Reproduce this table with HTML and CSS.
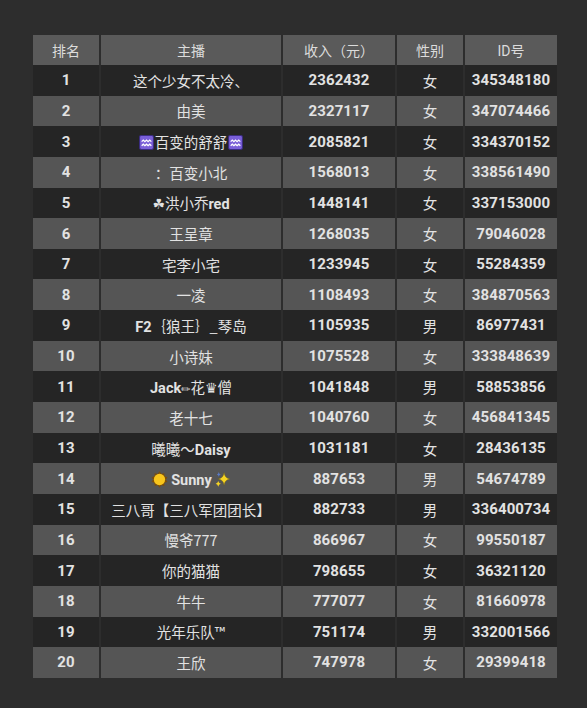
FILE: index.html
```html
<!DOCTYPE html>
<html lang="zh">
<head>
<meta charset="utf-8">
<link rel="stylesheet" href="styles.css">
</head>
<body>
<table class="rank">
  <colgroup>
    <col class="c1"><col class="c2"><col class="c3"><col class="c4"><col class="c5">
  </colgroup>
  <thead>
    <tr><th>排名</th><th>主播</th><th>收入（元）</th><th>性别</th><th>ID号</th></tr>
  </thead>
  <tbody>
    <tr><td class="n">1</td><td class="name">这个少女不太冷、</td><td class="n">2362432</td><td class="g">女</td><td class="n">345348180</td></tr>
    <tr><td class="n">2</td><td class="name">由美</td><td class="n">2327117</td><td class="g">女</td><td class="n">347074466</td></tr>
    <tr><td class="n">3</td><td class="name"><svg class="emo" viewBox="0 0 14 14"><rect x="0.5" y="0.5" width="13" height="13" rx="1.5" fill="#7a5fd8" stroke="#3a2c80"/><path d="M2.5 6.2 l1.5-1.4 1.5 1.4 1.5-1.4 1.5 1.4 1.5-1.4 1.5 1.4 M2.5 10 l1.5-1.4 1.5 1.4 1.5-1.4 1.5 1.4 1.5-1.4 1.5 1.4" fill="none" stroke="#fff" stroke-width="1.2"/></svg>百变的舒舒<svg class="emo" viewBox="0 0 14 14"><rect x="0.5" y="0.5" width="13" height="13" rx="1.5" fill="#7a5fd8" stroke="#3a2c80"/><path d="M2.5 6.2 l1.5-1.4 1.5 1.4 1.5-1.4 1.5 1.4 1.5-1.4 1.5 1.4 M2.5 10 l1.5-1.4 1.5 1.4 1.5-1.4 1.5 1.4 1.5-1.4 1.5 1.4" fill="none" stroke="#fff" stroke-width="1.2"/></svg></td><td class="n">2085821</td><td class="g">女</td><td class="n">334370152</td></tr>
    <tr><td class="n">4</td><td class="name">：百变小北</td><td class="n">1568013</td><td class="g">女</td><td class="n">338561490</td></tr>
    <tr><td class="n">5</td><td class="name"><span class="sym">☘</span>洪小乔<b>red</b></td><td class="n">1448141</td><td class="g">女</td><td class="n">337153000</td></tr>
    <tr><td class="n">6</td><td class="name">王呈章</td><td class="n">1268035</td><td class="g">女</td><td class="n">79046028</td></tr>
    <tr><td class="n">7</td><td class="name">宅李小宅</td><td class="n">1233945</td><td class="g">女</td><td class="n">55284359</td></tr>
    <tr><td class="n">8</td><td class="name">一凌</td><td class="n">1108493</td><td class="g">女</td><td class="n">384870563</td></tr>
    <tr><td class="n">9</td><td class="name"><b>F2</b>｛狼王｝_琴岛</td><td class="n">1105935</td><td class="g">男</td><td class="n">86977431</td></tr>
    <tr><td class="n">10</td><td class="name">小诗妹</td><td class="n">1075528</td><td class="g">女</td><td class="n">333848639</td></tr>
    <tr><td class="n">11</td><td class="name"><b>Jack</b><span class="sym small">✏</span>花<span class="sym">♛</span>僧</td><td class="n">1041848</td><td class="g">男</td><td class="n">58853856</td></tr>
    <tr><td class="n">12</td><td class="name">老十七</td><td class="n">1040760</td><td class="g">女</td><td class="n">456841345</td></tr>
    <tr><td class="n">13</td><td class="name">曦曦～<b>Daisy</b></td><td class="n">1031181</td><td class="g">女</td><td class="n">28436135</td></tr>
    <tr><td class="n">14</td><td class="name"><svg class="emo sun" viewBox="0 0 16 16"><path d="M8 0.3 L9.7 2.6 L12.5 2 L12.7 4.8 L15.5 6 L14 8 L15.5 10 L12.7 11.2 L12.5 14 L9.7 13.4 L8 15.7 L6.3 13.4 L3.5 14 L3.3 11.2 L0.5 10 L2 8 L0.5 6 L3.3 4.8 L3.5 2 L6.3 2.6 Z" fill="#7a4e0c"/><circle cx="8" cy="8" r="5.3" fill="#f7c51c"/></svg><b>Sunny</b><svg class="emo spark" viewBox="0 0 16 16"><path d="M9.5 1.5 Q10.2 6.8 15 7.5 Q10.2 8.2 9.5 13.5 Q8.8 8.2 4 7.5 Q8.8 6.8 9.5 1.5Z" fill="#f5d324" stroke="#6a5a10" stroke-width="0.4"/><path d="M4 9.5 Q4.4 11.6 6.4 12 Q4.4 12.4 4 14.8 Q3.6 12.4 1.6 12 Q3.6 11.6 4 9.5Z" fill="#f5d324"/><path d="M4.5 1 Q4.8 3 6.3 3.3 Q4.8 3.6 4.5 5.5 Q4.2 3.6 2.7 3.3 Q4.2 3 4.5 1Z" fill="#5a7ac8"/></svg></td><td class="n">887653</td><td class="g">男</td><td class="n">54674789</td></tr>
    <tr><td class="n">15</td><td class="name">三八哥【三八军团团长】</td><td class="n">882733</td><td class="g">男</td><td class="n">336400734</td></tr>
    <tr><td class="n">16</td><td class="name">慢爷777</td><td class="n">866967</td><td class="g">女</td><td class="n">99550187</td></tr>
    <tr><td class="n">17</td><td class="name">你的猫猫</td><td class="n">798655</td><td class="g">女</td><td class="n">36321120</td></tr>
    <tr><td class="n">18</td><td class="name">牛牛</td><td class="n">777077</td><td class="g">女</td><td class="n">81660978</td></tr>
    <tr><td class="n">19</td><td class="name">光年乐队™</td><td class="n">751174</td><td class="g">男</td><td class="n">332001566</td></tr>
    <tr><td class="n">20</td><td class="name">王欣</td><td class="n">747978</td><td class="g">女</td><td class="n">29399418</td></tr>
  </tbody>
</table>
</body>
</html>
```
FILE: styles.css
```css
html, body {
  margin: 0;
  background: #2d2d2d;
}
body {
  padding: 35px 0 0 31px;
  height: 708px;
  box-sizing: border-box;
  font-family: Roboto, "Noto Sans CJK SC", sans-serif;
  color: #e2e2e2;
}
.rank {
  border-collapse: separate;
  border-spacing: 2px 0;
  table-layout: fixed;
  width: 528px;
  background: #2d2d2d;
}
.c1 { width: 66px; }
.c2 { width: 180px; }
.c3 { width: 112px; }
.c4 { width: 66px; }
.c5 { width: 92px; }
th, td {
  padding: 0;
  text-align: center;
  vertical-align: middle;
  white-space: nowrap;
}
th {
  height: 30px;
  background: #5a5a5a;
  color: #dcdcdc;
  font-size: 14px;
  font-weight: 400;
}
td {
  height: 30.65px;
  font-size: 14.5px;
}
tbody tr:nth-child(odd) td { background: #252525; }
tbody tr:nth-child(even) td { background: #555555; }
.n {
  font-weight: 700;
  font-size: 15px;
  letter-spacing: 0.1px;
}
.name {
  font-family: "Noto Sans CJK SC", Roboto, sans-serif;
  font-weight: 400;
}
.name b {
  font-family: Roboto, sans-serif;
  font-weight: 700;
  font-size: 14.5px;
}
.g {
  font-family: "Noto Sans CJK SC", sans-serif;
  font-weight: 400;
}
.emo {
  width: 15px;
  height: 15px;
  vertical-align: -2px;
  margin: 0 1px;
}
.sun {
  width: 17px;
  height: 17px;
  vertical-align: -3px;
  margin-right: 3px;
}
.spark {
  width: 17px;
  height: 17px;
  vertical-align: -3px;
  margin-left: 2px;
}
.sym {
  font-family: "DejaVu Sans", sans-serif;
  font-size: 14px;
}
.small {
  font-size: 11px;
}
```
